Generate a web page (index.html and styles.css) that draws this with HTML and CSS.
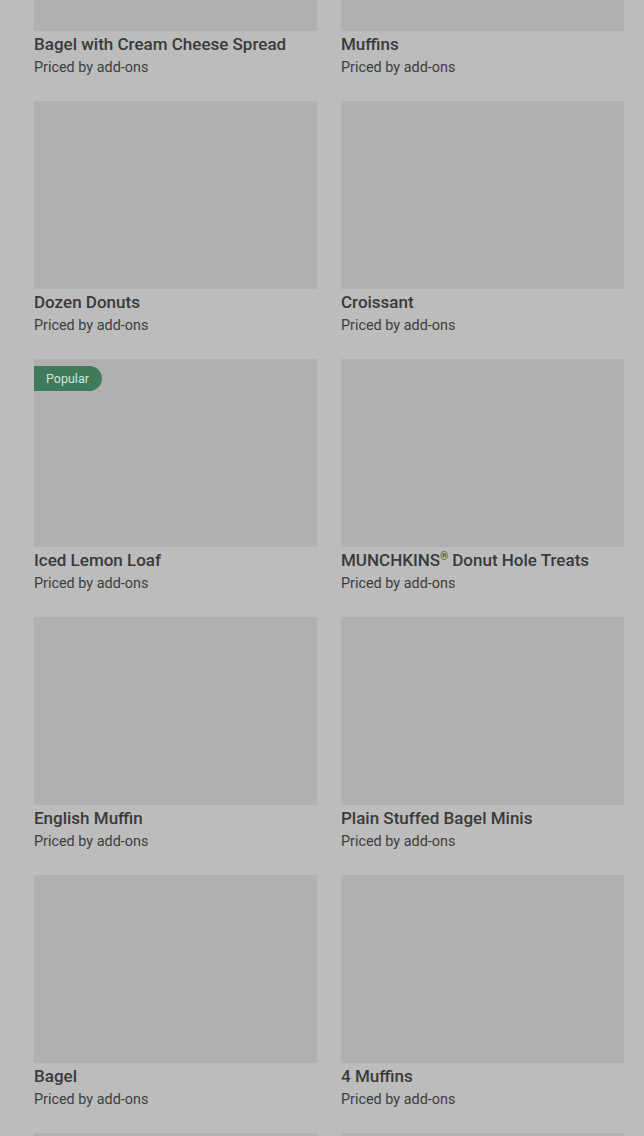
FILE: index.html
```html
<!DOCTYPE html>
<html lang="en">
<head>
    <meta charset="UTF-8" />
    <meta name="viewport" content="width=device-width, initial-scale=1" />
    <title>Menu</title>
    <link rel="stylesheet" href="styles.css">
</head>
<body>
<main class="menu-list">
    <div class="item">
        <div class="item-image"></div>
        <h3 class="item-name">Bagel with Cream Cheese Spread</h3>
        <p class="item-price">Priced by add-ons</p>
    </div>
    <div class="item">
        <div class="item-image"></div>
        <h3 class="item-name">Muffins</h3>
        <p class="item-price">Priced by add-ons</p>
    </div>
    <div class="item">
        <div class="item-image"></div>
        <h3 class="item-name">Dozen Donuts</h3>
        <p class="item-price">Priced by add-ons</p>
    </div>
    <div class="item">
        <div class="item-image"></div>
        <h3 class="item-name">Croissant</h3>
        <p class="item-price">Priced by add-ons</p>
    </div>
    <div class="item">
        <div class="item-image">
            <span class="badge">Popular</span>
        </div>
        <h3 class="item-name">Iced Lemon Loaf</h3>
        <p class="item-price">Priced by add-ons</p>
    </div>
    <div class="item">
        <div class="item-image"></div>
        <h3 class="item-name">MUNCHKINS<sup class="reg">®</sup> Donut Hole Treats</h3>
        <p class="item-price">Priced by add-ons</p>
    </div>
    <div class="item">
        <div class="item-image"></div>
        <h3 class="item-name">English Muffin</h3>
        <p class="item-price">Priced by add-ons</p>
    </div>
    <div class="item">
        <div class="item-image"></div>
        <h3 class="item-name">Plain Stuffed Bagel Minis</h3>
        <p class="item-price">Priced by add-ons</p>
    </div>
    <div class="item">
        <div class="item-image"></div>
        <h3 class="item-name">Bagel</h3>
        <p class="item-price">Priced by add-ons</p>
    </div>
    <div class="item">
        <div class="item-image"></div>
        <h3 class="item-name">4 Muffins</h3>
        <p class="item-price">Priced by add-ons</p>
    </div>
    <div class="item">
        <div class="item-image"></div>
    </div>
    <div class="item">
        <div class="item-image"></div>
    </div>
</main>
</body>
</html>
```

FILE: styles.css
```css
/* Base */
* {
    box-sizing: border-box;
}
body {
    margin: 0;
    height: 1136px;
    overflow: hidden;
    background: #bcbcbc;
    font-family: Roboto, "Liberation Sans", sans-serif;
    color: #3b3b3b;
}
/* Grid of menu items (page scrolled down) */
.menu-list {
    display: grid;
    grid-template-columns: 1fr 1fr;
    column-gap: 24px;
    row-gap: 23px;
    padding: 0 20px 0 34px;
    margin-top: -157px;
}
.item {
    display: flex;
    flex-direction: column;
}
.item-image {
    position: relative;
    height: 188px;
    background: #b0b0b0;
}
.badge {
    position: absolute;
    top: 7px;
    left: 0;
    padding: 0 13px 0 12px;
    height: 25px;
    line-height: 25px;
    font-size: 12.5px;
    color: #d3e4d9;
    background: #3f7b5b;
    border-radius: 0 13px 13px 0;
}
.item-name {
    margin: 1px 0 0;
    font-size: 17px;
    line-height: 24px;
    font-weight: 500;
    color: #3a3a3a;
}
.reg {
    font-size: 10px;
    line-height: 0;
    vertical-align: 6px;
}
.item-price {
    margin: 2px 0 0;
    font-size: 14.4px;
    line-height: 20px;
    color: #3e3e3e;
}
```
